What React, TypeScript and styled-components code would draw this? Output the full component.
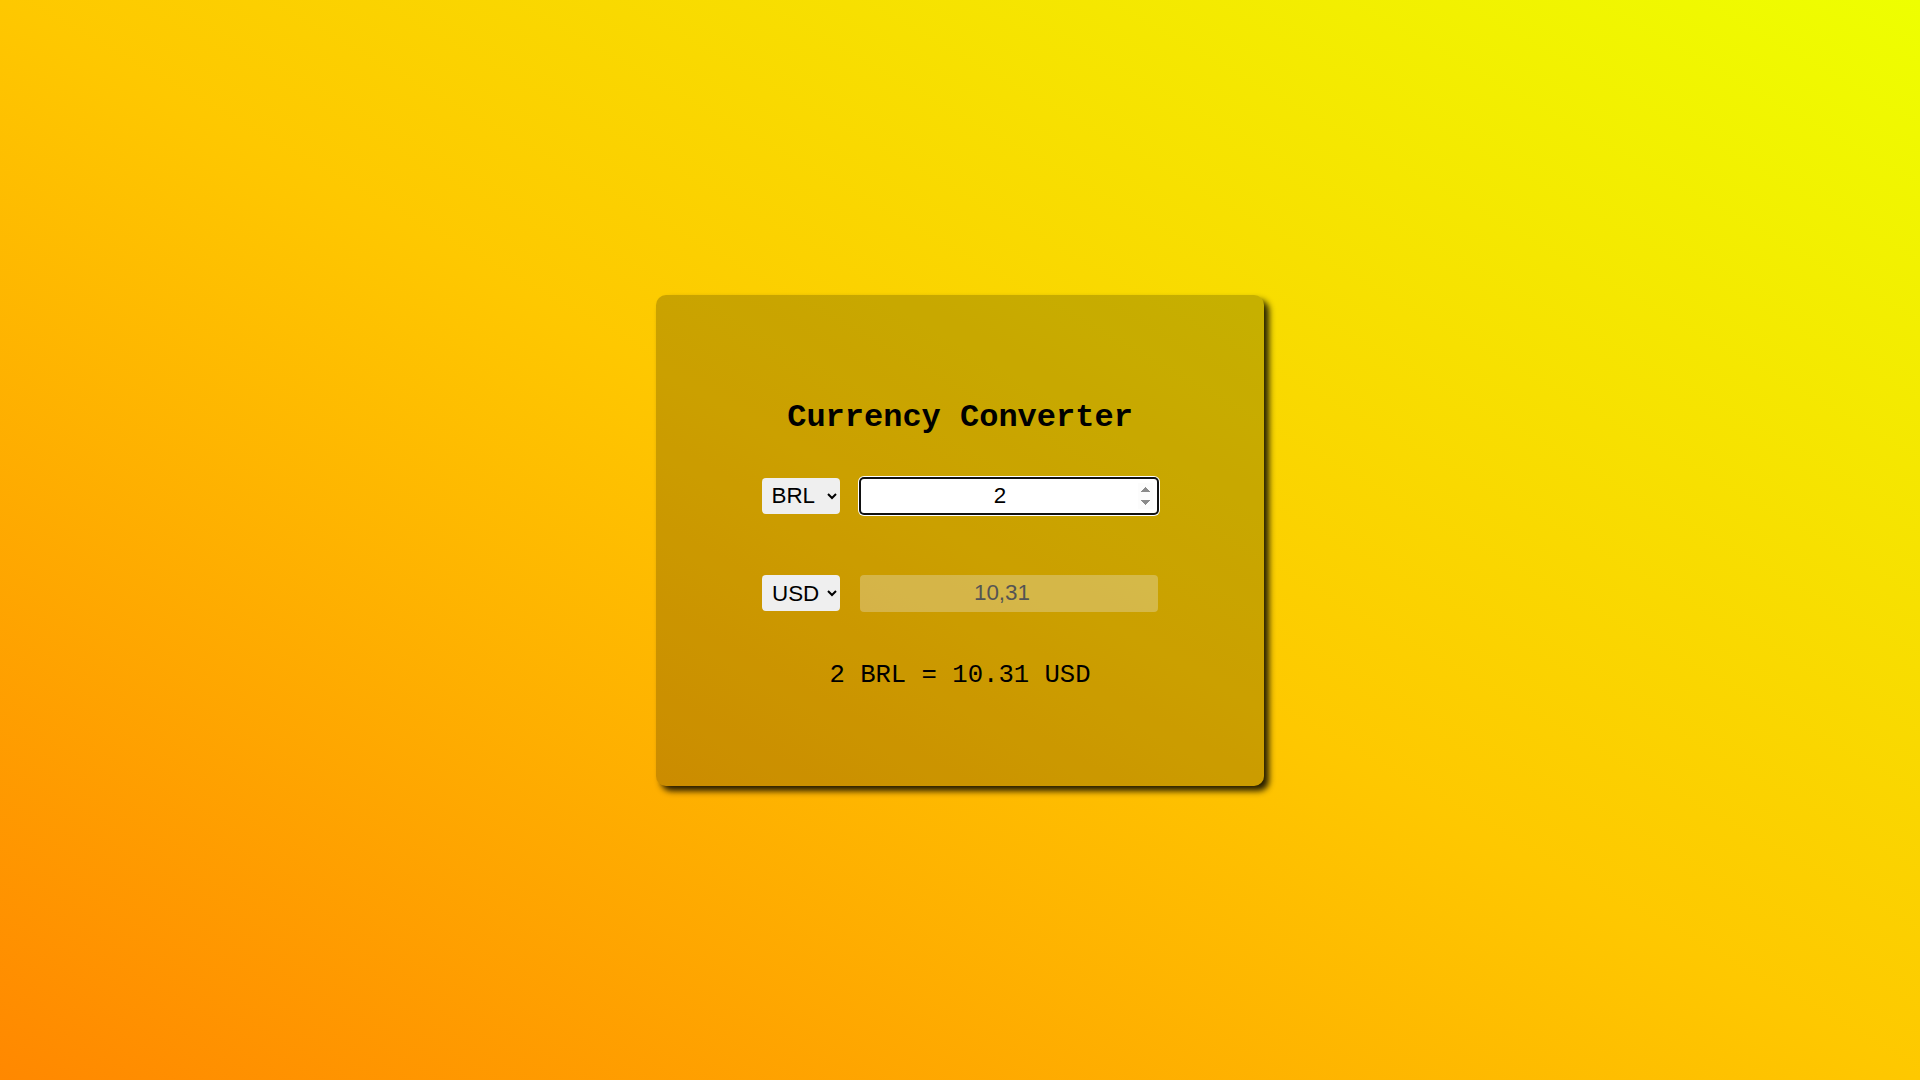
import React, { useState } from "react";
import styled, { createGlobalStyle } from "styled-components";

const GlobalStyle = createGlobalStyle`
  html, body { margin: 0; padding: 0; }
  body {
    min-height: 100vh;
    background: linear-gradient(to top right, #ff8800 0%, #fec800 50%, #eeff00 100%);
    font-family: "Liberation Sans", Arial, sans-serif;
  }
`;

const Page = styled.main`
  height: 1080px;
  display: flex;
  align-items: center;
  justify-content: center;
`;

const Card = styled.section`
  width: 608px;
  height: 491px;
  box-sizing: border-box;
  padding-top: 105px;
  background: rgba(0, 0, 0, 0.2);
  border-radius: 10px;
  box-shadow: 5px 5px 6px rgba(0, 0, 0, 0.85);
  display: flex;
  flex-direction: column;
  align-items: center;
`;

const Title = styled.h1`
  margin: 0 0 41px;
  font-family: "Liberation Mono", "Courier New", monospace;
  font-size: 32px;
  font-weight: 700;
  color: #000;
  line-height: 36px;
`;

const Row = styled.div<{ $gap: number; $spacing: number }>`
  display: flex;
  align-items: center;
  gap: ${(p) => p.$spacing}px;
  margin-bottom: ${(p) => p.$gap}px;
`;

const Select = styled.select`
  width: 78px;
  height: 36px;
  border: none;
  border-radius: 4px;
  background-color: #efefef;
  color: #000;
  font-family: "Liberation Sans", Arial, sans-serif;
  font-size: 22.4px;
  padding: 0 2px 0 6px;
`;

const Amount = styled.input`
  width: 300px;
  height: 38px;
  box-sizing: border-box;
  border: none;
  border-radius: 5px;
  background: #fff;
  color: #000;
  text-align: center;
  font-family: "Liberation Sans", Arial, sans-serif;
  font-size: 22.4px;
  padding: 0 6px 0 4px;
  box-shadow: inset 0 0 0 2px #111, 0 0 0 1px #fff;
  outline: none;
  &:focus { outline: none; }
`;

const Output = styled.input`
  width: 298px;
  height: 37px;
  box-sizing: border-box;
  border: none;
  border-radius: 4px;
  background: rgba(239, 239, 239, 0.3);
  color: #545454;
  text-align: center;
  font-family: "Liberation Sans", Arial, sans-serif;
  font-size: 22.4px;
  padding: 0 16px 0 2px;
`;

const Result = styled.p`
  margin: 0;
  font-family: "Liberation Mono", "Courier New", monospace;
  font-size: 25.6px;
  line-height: 28px;
  color: #000;
`;

export default function App() {
  const [from, setFrom] = useState("BRL");
  const [to, setTo] = useState("USD");
  const [amount, setAmount] = useState("2");
  return (
    <>
      <GlobalStyle />
      <Page>
        <Card>
          <Title>Currency Converter</Title>
          <Row $gap={60} $spacing={19}>
            <Select value={from} onChange={(e) => setFrom(e.target.value)}>
              <option>BRL</option>
              <option>USD</option>
              <option>EUR</option>
            </Select>
            <Amount
              type="number"
              autoFocus
              value={amount}
              onChange={(e) => setAmount(e.target.value)}
            />
          </Row>
          <Row $gap={50} $spacing={20}>
            <Select value={to} onChange={(e) => setTo(e.target.value)}>
              <option>USD</option>
              <option>BRL</option>
              <option>EUR</option>
            </Select>
            <Output type="text" value="10,31" disabled readOnly />
          </Row>
          <Result>2 BRL = 10.31 USD</Result>
        </Card>
      </Page>
    </>
  );
}
